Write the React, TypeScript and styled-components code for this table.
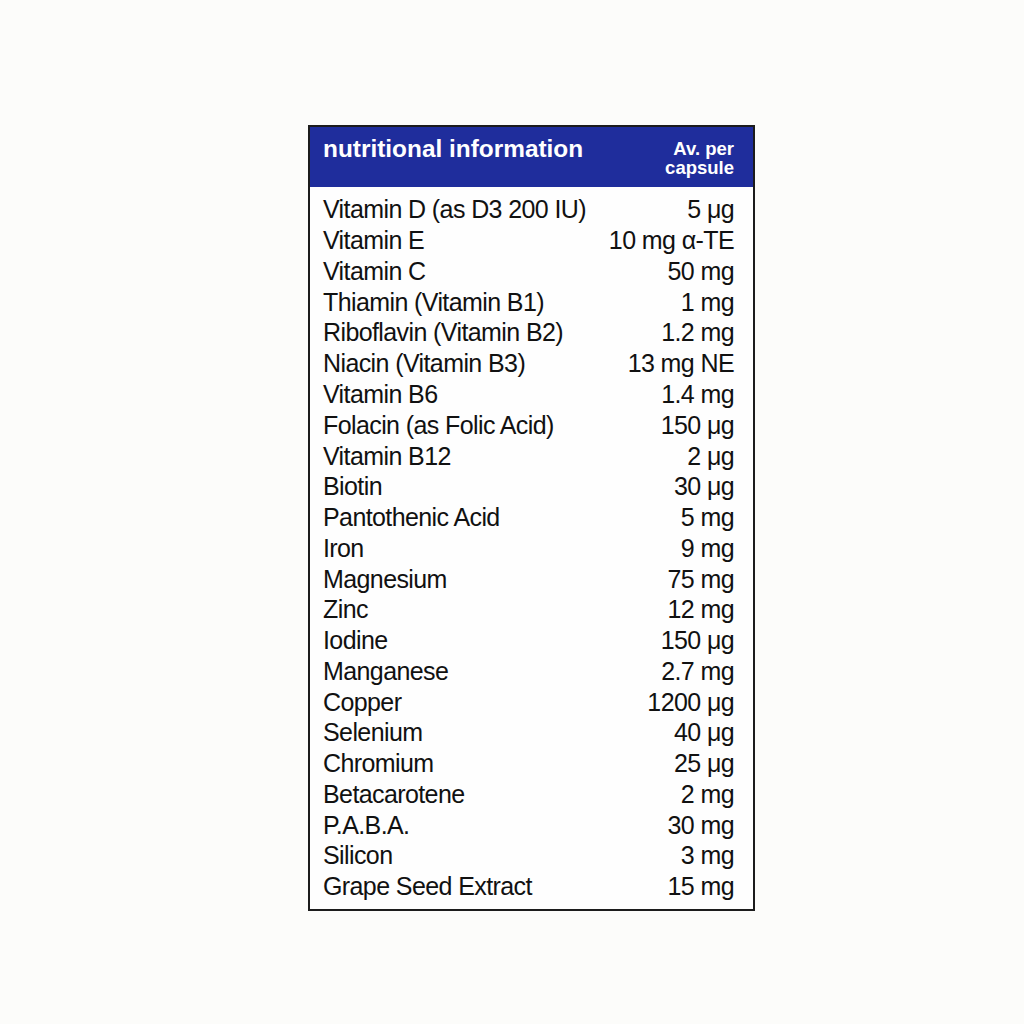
import React from "react";
import styled, { createGlobalStyle } from "styled-components";

const Global = createGlobalStyle`
  html, body { margin: 0; padding: 0; background: #fcfcfa; }
  body { font-family: "Liberation Sans", Arial, sans-serif; }
`;

const Page = styled.div`
  width: 1024px;
  height: 1024px;
  box-sizing: border-box;
  padding: 125px 0 0 308px;
  background: #fcfcfa;
`;

const Panel = styled.div`
  width: 447px;
  height: 786px;
  box-sizing: border-box;
  border: 2px solid #1c1c1c;
  background: #fefefe;
  display: flex;
  flex-direction: column;
`;

const Header = styled.div`
  height: 60px;
  background: #1f2d9c;
  color: #ffffff;
  display: flex;
  align-items: center;
  justify-content: space-between;
  padding: 0 19px 0 13px;
  box-sizing: border-box;
`;

const Title = styled.div`
  font-weight: bold;
  font-size: 24.4px;
  margin-top: -16px;
`;

const PerLabel = styled.div`
  font-weight: bold;
  font-size: 18.5px;
  line-height: 19px;
  text-align: right;
  margin-top: 2px;
`;

const Body = styled.div`
  padding: 7.5px 19px 0 13px;
  display: flex;
  flex-direction: column;
`;

const Row = styled.div`
  display: flex;
  justify-content: space-between;
  align-items: center;
  height: 30.77px;
  font-size: 25px;
  letter-spacing: -0.6px;
  color: #111111;
`;

const Name = styled.span``;
const Amount = styled.span`
  text-align: right;
`;

const rows: [string, string][] = [
  ["Vitamin D (as D3 200 IU)", "5 μg"],
  ["Vitamin E", "10 mg α-TE"],
  ["Vitamin C", "50 mg"],
  ["Thiamin (Vitamin B1)", "1 mg"],
  ["Riboflavin (Vitamin B2)", "1.2 mg"],
  ["Niacin (Vitamin B3)", "13 mg NE"],
  ["Vitamin B6", "1.4 mg"],
  ["Folacin (as Folic Acid)", "150 μg"],
  ["Vitamin B12", "2 μg"],
  ["Biotin", "30 μg"],
  ["Pantothenic Acid", "5 mg"],
  ["Iron", "9 mg"],
  ["Magnesium", "75 mg"],
  ["Zinc", "12 mg"],
  ["Iodine", "150 μg"],
  ["Manganese", "2.7 mg"],
  ["Copper", "1200 μg"],
  ["Selenium", "40 μg"],
  ["Chromium", "25 μg"],
  ["Betacarotene", "2 mg"],
  ["P.A.B.A.", "30 mg"],
  ["Silicon", "3 mg"],
  ["Grape Seed Extract", "15 mg"],
];

export default function App() {
  return (
    <>
      <Global />
      <Page>
        <Panel>
          <Header>
            <Title>nutritional information</Title>
            <PerLabel>
              Av. per
              <br />
              capsule
            </PerLabel>
          </Header>
          <Body>
            {rows.map(([n, a]) => (
              <Row key={n}>
                <Name>{n}</Name>
                <Amount>{a}</Amount>
              </Row>
            ))}
          </Body>
        </Panel>
      </Page>
    </>
  );
}
